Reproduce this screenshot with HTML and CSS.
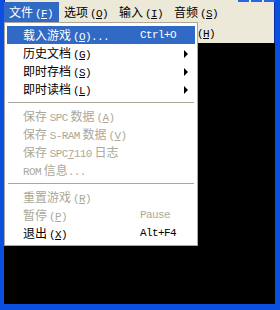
FILE: index.html
```html
<!DOCTYPE html>
<html lang="zh-CN">
<head>
  <meta charset="UTF-8" />
  <title>Snes9x</title>
  <link rel="stylesheet" href="styles.css">
</head>
<body>
  <div class="window">
    <div class="title-peek">
      <span class="tb-btn"></span><span class="tb-btn"></span><span class="tb-btn"></span>
    </div>
    <div class="menubar">
      <div class="bar-row">
        <span class="bar-item active">文件<span class="en key">(<u>F</u>)</span></span>
        <span class="bar-item">选项<span class="en key">(<u>O</u>)</span></span>
        <span class="bar-item">输入<span class="en key">(<u>I</u>)</span></span>
        <span class="bar-item">音频<span class="en key">(<u>S</u>)</span></span>
      </div>
      <!-- second row: the items before 帮助 sit behind the open menu -->
      <div class="bar-row wrapped">
        <span class="bar-item">帮助<span class="en key">(<u>H</u>)</span></span>
      </div>
    </div>
    <div class="screen"></div>

    <div class="dropdown">
      <div class="item selected"><span>载入游戏<span class="en key">(<u>O</u>)...</span></span><span class="en">Ctrl+O</span></div>
      <div class="item"><span>历史文档<span class="en key">(<u>G</u>)</span></span><span class="arrow"></span></div>
      <div class="item"><span>即时存档<span class="en key">(<u>S</u>)</span></span><span class="arrow"></span></div>
      <div class="item"><span>即时读档<span class="en key">(<u>L</u>)</span></span><span class="arrow"></span></div>
      <div class="sep"></div>
      <div class="item disabled"><span>保存 <span class="en">SPC</span> 数据<span class="en key">(<u>A</u>)</span></span></div>
      <div class="item disabled"><span>保存 <span class="en">S-RAM</span> 数据<span class="en key">(<u>V</u>)</span></span></div>
      <div class="item disabled"><span>保存 <span class="en">SPC<u>7</u>110</span> 日志</span></div>
      <div class="item disabled"><span><span class="en">ROM</span> 信息<span class="en">...</span></span></div>
      <div class="sep"></div>
      <div class="item disabled"><span>重置游戏<span class="en key">(<u>R</u>)</span></span></div>
      <div class="item disabled"><span>暂停<span class="en key">(<u>P</u>)</span></span><span class="en">Pause</span></div>
      <div class="item"><span>退出<span class="en key">(<u>X</u>)</span></span><span class="en">Alt+F4</span></div>
    </div>
  </div>
</body>
</html>
```

FILE: styles.css
```css
html, body {
  margin: 0;
  padding: 0;
}
body {
  width: 280px;
  height: 310px;
  overflow: hidden;
  font-family: "Noto Sans CJK SC", "DejaVu Sans", sans-serif;
  font-size: 12px;
  color: #000;
}
.window {
  position: relative;
  box-sizing: border-box;
  width: 280px;
  height: 310px;
  display: flex;
  flex-direction: column;
  background: #ece9d8;
  border-left: 4px solid #0b4fe0;
  border-right: 5px solid #0b4fe0;
  border-bottom: 6px solid #0b4fe0;
  box-shadow: inset -1px 0 0 #0a2fa8, inset 1px 0 0 #0a2fa8;
}
.title-peek {
  height: 2px;
  display: flex;
  justify-content: flex-end;
  gap: 2px;
}
.tb-btn {
  width: 11px;
  background: #2a64e6;
}
.menubar {
  display: flex;
  flex-direction: column;
}
.bar-row {
  display: flex;
  height: 20px;
  line-height: 20px;
}
.bar-row.wrapped {
  padding-left: 162px;
}
.bar-item {
  width: 55px;
  box-sizing: border-box;
  padding: 0 5px;
  white-space: nowrap;
}
.bar-item.active {
  background: #316ac5;
  color: #fff;
}
.screen {
  flex: 1;
  background: #000;
  margin-top: 1px;
}
.en {
  font-family: "Liberation Mono", "DejaVu Sans Mono", monospace;
  font-size: 11px;
  letter-spacing: -0.6px;
}
.key {
  margin-left: 2px;
}
.dropdown {
  position: absolute;
  left: 0;
  top: 22px;
  width: 194px;
  box-sizing: border-box;
  background: #fff;
  border: 1px solid #aca899;
  padding: 3px 2px;
}
.item {
  height: 18px;
  line-height: 18px;
  display: grid;
  grid-template-columns: 117px 1fr;
  padding-left: 16px;
  white-space: nowrap;
}
.item.selected {
  background: #316ac5;
  color: #fff;
}
.item.disabled {
  color: #aca899;
}
.arrow {
  justify-self: end;
  align-self: center;
  margin-right: 7px;
  width: 0;
  height: 0;
  border-top: 4px solid transparent;
  border-bottom: 4px solid transparent;
  border-left: 4px solid #000;
}
.sep {
  height: 9px;
  display: flex;
  align-items: center;
  padding: 0 1px;
}
.sep::before {
  content: "";
  flex: 1;
  height: 1px;
  background: #aca899;
}
```
